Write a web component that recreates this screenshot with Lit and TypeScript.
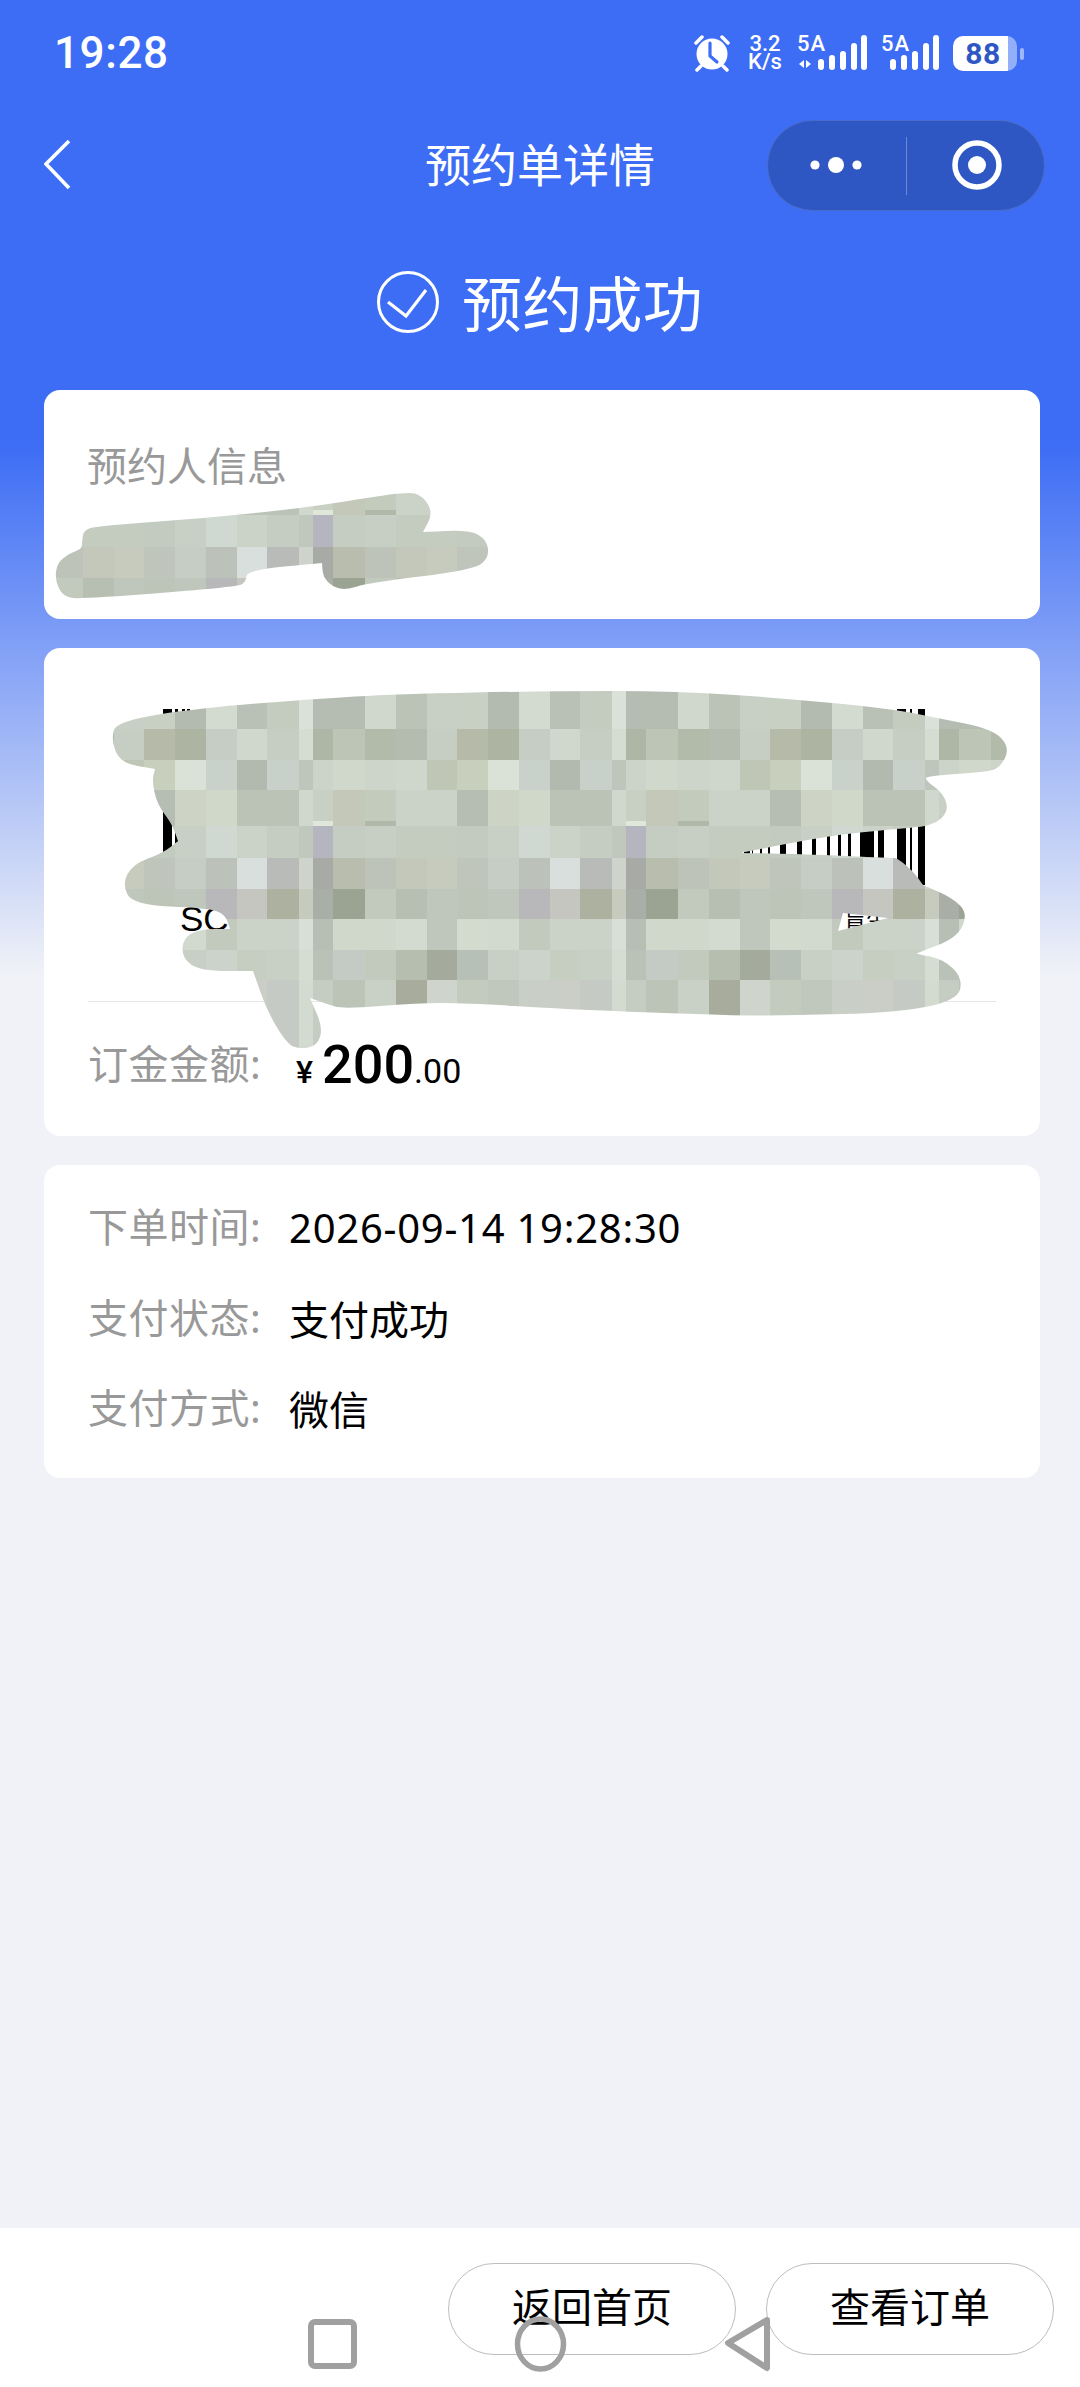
import { LitElement, html, css, svg } from "lit";
import { customElement } from "lit/decorators.js";

type Pt = [number, number];

function smooth(pts: Pt[]): string {
  const n = pts.length;
  const mid = (a: Pt, b: Pt): Pt => [(a[0] + b[0]) / 2, (a[1] + b[1]) / 2];
  const s = mid(pts[n - 1], pts[0]);
  let d = `M${s[0]} ${s[1]}`;
  for (let i = 0; i < n; i++) {
    const p = pts[i];
    const m = mid(p, pts[(i + 1) % n]);
    d += `Q${p[0]} ${p[1]} ${m[0]} ${m[1]}`;
  }
  return d + "Z";
}

const EDGES = [0, 20, 52, 83, 114, 144, 175, 206, 237, 267, 299, 313];
const ROWS: { y0: number; y1: number; c: string[] }[] = [
  { y0: 680, y1: 728, c: ["b5bdb2", "b5bdb2", "d0d8cd", "bbc3b6", "c8d0c6", "c8d0c4", "b3bab0", "d3dad0", "b9c1b6", "c4ccc0", "dbe1d8"] },
  { y0: 728, y1: 759, c: ["aeb6a6", "bdc5b6", "b2baa9", "b4bcb0", "c6cec3", "b5baa9", "adb5a2", "c5cdc4", "d0d7cd", "c6cec3", "d5dcd2"] },
  { y0: 759, y1: 789, c: ["ccd4c9", "d0d7cb", "cdd5cb", "cfd7cd", "bfc6b6", "c9cfbd", "dae1d6", "c8d1ca", "b2baaf", "c8d1c9", "bec6bb"] },
  { y0: 789, y1: 820, c: ["c8d0c4", "c3c8b8", "c3cbbd", "cbd3c8", "cbd3c8", "b6beb3", "cdd4c5", "d0d8ca", "bbc3b6", "bbc3b6", "d0d7cc"] },
  { y0: 820, y1: 825, c: ["dfe6da", "c3c8b8", "b0b8aa", "cbd3c8", "cbd3c8", "b6beb3", "cdd4c5", "d0d8ca", "bbc3b6", "bbc3b6", "d0d7cc"] },
  { y0: 825, y1: 857, c: ["b5b5bf", "c5cdc2", "c7cfc4", "c4ccc0", "c4ccc0", "c3cbc0", "c8d0c6", "d0d8d2", "cbd3c8", "c5cdc2", "c0c8bd"] },
  { y0: 857, y1: 888, c: ["a7aaa5", "b9bdae", "bdc3b9", "c4c8ba", "c6cbbd", "bfc5ba", "c5cdc4", "bcc2b9", "d9dfdc", "b9bbb8", "ced4cb"] },
  { y0: 888, y1: 918, c: ["a9afa6", "9ba392", "c2cabd", "b7bfb2", "bfc7bc", "bdc5b9", "bfc7bc", "b8b8bb", "c5c6c0", "adb1a0", "c6cbbe"] },
  { y0: 918, y1: 949, c: ["b7bfb5", "d0d8cc", "d0d8cc", "d3dbd0", "bfc7bc", "d3dbce", "d2dacf", "c2cabe", "cbd3c8", "cbd3c8", "d8dfd6"] },
  { y0: 949, y1: 979, c: ["bac2b8", "c3cbc4", "c2cabd", "b6beb0", "a5ab9c", "b6c0b6", "c8d0c6", "cbd3cb", "c6cec2", "c8d0c6", "d5dcd2"] },
  { y0: 979, y1: 1050, c: ["c5cdc2", "bcc4b8", "c9d1c6", "a8ac9c", "cfd5cc", "c3cbbf", "c0c8be", "c9cfc6", "cacec6", "c6cac4", "d3dad0"] },
];

function mosaic(dy: number) {
  const out: unknown[] = [];
  for (const r of ROWS) {
    for (let k = -1; k < 3; k++) {
      for (let i = 0; i < 11; i++) {
        const x = 313 + k * 313 + EDGES[i];
        const w = EDGES[i + 1] - EDGES[i];
        out.push(svg`<rect x=${x} y=${r.y0 + dy} width=${w} height=${r.y1 - r.y0} fill=${"#" + r.c[i]}></rect>`);
      }
    }
  }
  return out;
}

const BLOB2: Pt[] = [
  [117, 720], [200, 707], [313, 698], [397, 693], [550, 690], [677, 690], [793, 698], [893, 708], [937, 717],
  [993, 728], [1010, 747], [1000, 767], [985, 771], [927, 775], [925, 779], [943, 792], [949, 810], [933, 825],
  [893, 828], [827, 835], [745, 851], [740, 852], [745, 852], [800, 853], [893, 857], [897, 857], [913, 870], [923, 884], [923, 884],
  [953, 897], [968, 913], [957, 937], [917, 952], [917, 953], [943, 958], [963, 977], [957, 1000], [893, 1012],
  [793, 1014], [743, 1015], [560, 1008], [467, 1002], [417, 1002], [343, 1008], [327, 1003], [310, 997], [310, 997],
  [323, 1027], [317, 1045], [300, 1048], [287, 1043], [267, 1010], [253, 970], [253, 970], [200, 970], [182, 957], [183, 937],
  [200, 928], [230, 928], [230, 928], [225, 913], [207, 907], [133, 904], [122, 883], [133, 863], [163, 852],
  [178, 840], [178, 840], [172, 823], [157, 803], [152, 780], [155, 768], [155, 768], [120, 762], [111, 738],
];
const HOLE = "M843 912L888 917L838 930Z";
const BLOB1: Pt[] = [
  [55, 580], [57, 563], [70, 553], [82, 549], [82, 540], [84, 530], [97, 526], [207, 518], [313, 507], [407, 491], [423, 496], [433, 513],
  [423, 532], [423, 532], [470, 530], [487, 540], [489, 558], [473, 570], [367, 583], [347, 590], [333, 587], [323, 577],
  [322, 563], [322, 563], [247, 570], [246, 582], [237, 587], [83, 599], [63, 597],
];

const TOP_BARS: [number, number][] = [
  [163, 9], [175, 3], [182, 3], [187, 3],
  [752, 1], [760, 2], [768, 2], [780, 6], [797, 5], [812, 4], [827, 3], [838, 3], [848, 3], [860, 14], [878, 6], [897, 9], [910, 2], [918, 7],
];
const hidden: [number, number][] = [];
for (let x = 200, i = 0; x < 745; i++) {
  const w = 2 + ((i * 7) % 5) * 2;
  hidden.push([x, w]);
  x += w + 3 + ((i * 5) % 4) * 2;
}

@customElement("app-root")
export class AppRoot extends LitElement {
  static styles = css`
    :host {
      display: block;
      width: 1080px;
      height: 2387px;
      overflow: hidden;
      font-family: "Noto Sans", "Noto Sans CJK SC", sans-serif;
      color: #000;
    }
    .page {
      height: 2387px;
      display: flex;
      flex-direction: column;
      background: linear-gradient(#3d6df5 0, #3d6df5 445px, #f0f2f7 975px);
    }
    .status {
      height: 119px;
      display: flex;
      justify-content: space-between;
      align-items: flex-start;
      padding: 0 56px 0 54px;
      color: #fff;
      flex: none;
      box-sizing: border-box;
    }
    .time {
      font: 500 44px/52px Roboto, sans-serif;
      margin-top: 27px;
      letter-spacing: 0.6px;
    }
    .sys {
      display: flex;
      align-items: flex-start;
      margin-top: 34px;
      height: 38px;
    }
    .speed {
      display: flex;
      flex-direction: column;
      align-items: center;
      font: 500 22px/18px Roboto, sans-serif;
      margin: 1px 0 0 17px;
      width: 34px;
    }
    .sim {
      position: relative;
      width: 70px;
      height: 38px;
      margin-left: 15px;
    }
    .sim + .sim { width: 58px; margin-left: 14px; }
    .sim b {
      position: absolute;
      left: 0;
      top: 1px;
      font: 500 22px/18px Roboto, sans-serif;
      letter-spacing: 1px;
    }
    .sim svg { display: block; }
    .batt {
      display: flex;
      align-items: center;
      margin: 2px 0 0 14px;
    }
    .cell {
      width: 64px;
      height: 35px;
      box-sizing: border-box;
      border-radius: 10px;
      background: linear-gradient(90deg, #fff 0 86%, rgba(255, 255, 255, 0.45) 86%);
      color: #2f57c4;
      font: 700 30px/35px Roboto, sans-serif;
      text-align: center;
      letter-spacing: 0.5px;
      padding-right: 4px;
    }
    .tip {
      width: 4px;
      height: 12px;
      margin-left: 3px;
      border-radius: 2px;
      background: rgba(255, 255, 255, 0.5);
    }
    .nav {
      height: 92px;
      flex: none;
      position: relative;
      display: flex;
      align-items: center;
      justify-content: space-between;
      padding: 0 35px 0 44px;
    }
    .back { display: block; }
    .title {
      position: absolute;
      left: 0;
      right: 0;
      top: 0;
      bottom: 7px;
      display: flex;
      align-items: center;
      justify-content: center;
      color: #fff;
      font-size: 46px;
      pointer-events: none;
    }
    .capsule {
      width: 278px;
      height: 91px;
      box-sizing: border-box;
      border-radius: 46px;
      background: #2f57c4;
      border: 1px solid rgba(255, 255, 255, 0.12);
      position: relative;
      z-index: 1;
    }
    .capsule svg { display: block; }
    .hero {
      height: 179px;
      flex: none;
      box-sizing: border-box;
      padding-top: 60px;
      display: flex;
      justify-content: center;
      gap: 23px;
      color: #fff;
    }
    .hero svg { display: block; }
    .hero span { font-size: 60px; line-height: 66px; letter-spacing: 0.3px; }
    .cards {
      display: flex;
      flex-direction: column;
      gap: 29px;
      padding: 0 40px 0 44px;
      flex: 1;
    }
    .card {
      background: #fff;
      border-radius: 16px;
      position: relative;
    }
    .c1 { height: 229px; box-sizing: border-box; padding: 48px 43px 0; }
    .lab { color: #999; font-size: 40px; line-height: 56px; }
    .mask {
      position: absolute;
      left: 0;
      top: 0;
      width: 996px;
      display: block;
    }
    .c2 {
      height: 488px;
      box-sizing: border-box;
      padding: 61px 44px 0;
      overflow: hidden;
    }
    .code { display: block; margin-left: 75px; }
    .cap {
      display: flex;
      justify-content: space-between;
      margin: 14px 108px 0 92px;
      height: 40px;
    }
    .cap .a { font: 35px/40px "Liberation Sans", sans-serif; }
    .cap .b { font: 22px/40px "Noto Sans CJK SC", sans-serif; margin-top: -1px; }
    .rule {
      height: 1px;
      background: #e6e6e6;
      margin-top: 62px;
    }
    .amount {
      display: flex;
      align-items: center;
      height: 100px;
      margin-top: 12px;
    }
    .amount .lab { width: 208px; flex: none; letter-spacing: 0.5px; }
    .money { display: flex; align-items: baseline; font-family: Roboto, sans-serif; }
    .yen { font-size: 32px; font-weight: 500; margin-right: 9px; }
    .big { font-size: 54px; font-weight: 500; }
    .sm { font-size: 34px; }
    .c3 { height: 313px; box-sizing: border-box; padding: 17px 44px 0; }
    .row { display: flex; align-items: center; height: 90.5px; }
    .row .lab { width: 201px; flex: none; letter-spacing: 0.5px; }
    .val { font-size: 40px; }
    .date { letter-spacing: 0.75px; }
    .foot {
      position: relative;
      height: 159px;
      flex: none;
      background: #fff;
      box-sizing: border-box;
      padding: 35px 26px 0 0;
      display: flex;
      justify-content: flex-end;
      gap: 30px;
    }
    .btn {
      width: 288px;
      height: 92px;
      box-sizing: border-box;
      border: 1px solid #bdbdbd;
      border-radius: 46px;
      display: flex;
      align-items: center;
      justify-content: center;
      font-size: 40px;
      padding-bottom: 8px;
    }
    .sysnav {
      position: absolute;
      left: 0;
      top: 0;
      display: block;
    }
  `;

  render() {
    return html`<div class="page">
      <div class="status">
        <div class="time">19:28</div>
        <div class="sys">
          <svg width="38" height="38" viewBox="0 0 38 38" fill="#fff">
            <circle cx="19" cy="20" r="15.5"></circle>
            <path d="M3 9 9 3M29 3l6 6M8 32l-4 4M30 32l4 4" stroke="#fff" stroke-width="3.5" stroke-linecap="round" fill="none"></path>
            <path d="M17 9v13l7 6" stroke="#3d6df5" stroke-width="3.2" fill="none" stroke-linecap="round"></path>
          </svg>
          <div class="speed"><span>3.2</span><span>K/s</span></div>
          <div class="sim">
            <b>5A</b>
            <svg width="70" height="38" viewBox="0 0 70 38" fill="#fff">
              <path d="M2 30l5-4v8zM9 26l5 4-5 4z"></path>
              <rect x="21" y="25" width="6" height="11" rx="3"></rect>
              <rect x="32" y="21" width="6" height="15" rx="3"></rect>
              <rect x="43" y="17" width="6" height="19" rx="3"></rect>
              <rect x="54" y="9" width="6" height="27" rx="3"></rect>
              <rect x="64" y="1" width="6" height="35" rx="3"></rect>
            </svg>
          </div>
          <div class="sim">
            <b>5A</b>
            <svg width="58" height="38" viewBox="12 0 58 38" fill="#fff">
              <rect x="21" y="25" width="6" height="11" rx="3"></rect>
              <rect x="32" y="21" width="6" height="15" rx="3"></rect>
              <rect x="43" y="17" width="6" height="19" rx="3"></rect>
              <rect x="54" y="9" width="6" height="27" rx="3"></rect>
              <rect x="64" y="1" width="6" height="35" rx="3"></rect>
            </svg>
          </div>
          <div class="batt"><div class="cell">88</div><div class="tip"></div></div>
        </div>
      </div>

      <div class="nav">
        <svg class="back" width="28" height="52" viewBox="0 0 28 52" fill="none" stroke="#fff" stroke-width="3.6">
          <path d="M25 2 2 25l23 24"></path>
        </svg>
        <div class="title">预约单详情</div>
        <div class="capsule">
          <svg width="276" height="89" viewBox="0 0 276 89">
            <circle cx="47" cy="44" r="4.6" fill="#fff"></circle>
            <circle cx="68" cy="44" r="8" fill="#fff"></circle>
            <circle cx="89" cy="44" r="4.6" fill="#fff"></circle>
            <rect x="138" y="16" width="1" height="58" fill="rgba(255,255,255,.3)"></rect>
            <circle cx="209" cy="44" r="22" fill="none" stroke="#fff" stroke-width="5.5"></circle>
            <circle cx="209" cy="44" r="9" fill="#fff"></circle>
          </svg>
        </div>
      </div>

      <div class="hero">
        <svg width="62" height="62" viewBox="0 0 62 62" fill="none" stroke="#fff" stroke-width="3">
          <circle cx="31" cy="31" r="29.5"></circle>
          <path d="M11 31 29 45 49 19" stroke-width="3.2"></path>
        </svg>
        <span>预约成功</span>
      </div>

      <div class="cards">
        <div class="card c1">
          <div class="lab">预约人信息</div>
          <svg class="mask" height="229" viewBox="44 390 996 229">
            <defs><clipPath id="b1"><path d=${smooth(BLOB1)}></path></clipPath></defs>
            <g clip-path="url(#b1)" shape-rendering="crispEdges">${mosaic(-310)}</g>
          </svg>
        </div>

        <div class="card c2">
          <svg class="code" width="762" height="176" viewBox="163 708 762 176" fill="#000">
            ${TOP_BARS.concat(hidden).map((b) => svg`<rect x=${b[0]} y="708" width=${b[1]} height="176"></rect>`)}
          </svg>
          <div class="cap"><span class="a">SC</span><span class="b">盲生</span></div>
          <div class="rule"></div>
          <div class="amount">
            <div class="lab">订金金额:</div>
            <div class="money"><span class="yen">¥</span><span class="big">200</span><span class="sm">.00</span></div>
          </div>
          <svg class="mask" height="488" viewBox="44 647 996 488">
            <defs><clipPath id="b2"><path clip-rule="evenodd" d=${smooth(BLOB2) + HOLE}></path></clipPath></defs>
            <g clip-path="url(#b2)" shape-rendering="crispEdges">${mosaic(0)}</g>
          </svg>
        </div>

        <div class="card c3">
          <div class="row"><div class="lab">下单时间:</div><div class="val date">2026-09-14 19:28:30</div></div>
          <div class="row"><div class="lab">支付状态:</div><div class="val">支付成功</div></div>
          <div class="row"><div class="lab">支付方式:</div><div class="val">微信</div></div>
        </div>
      </div>

      <div class="foot">
        <div class="btn">返回首页</div>
        <div class="btn">查看订单</div>
        <svg class="sysnav" width="1080" height="159" viewBox="0 2228 1080 159" fill="none" stroke="#a0a0a0" stroke-width="6" stroke-linejoin="round">
          <rect x="311" y="2322" width="43" height="44" rx="4"></rect>
          <ellipse cx="540.5" cy="2344" rx="23" ry="25" stroke-width="5.5"></ellipse>
          <path d="M767 2320 728 2343 767 2368Z"></path>
        </svg>
      </div>
    </div>`;
  }
}
